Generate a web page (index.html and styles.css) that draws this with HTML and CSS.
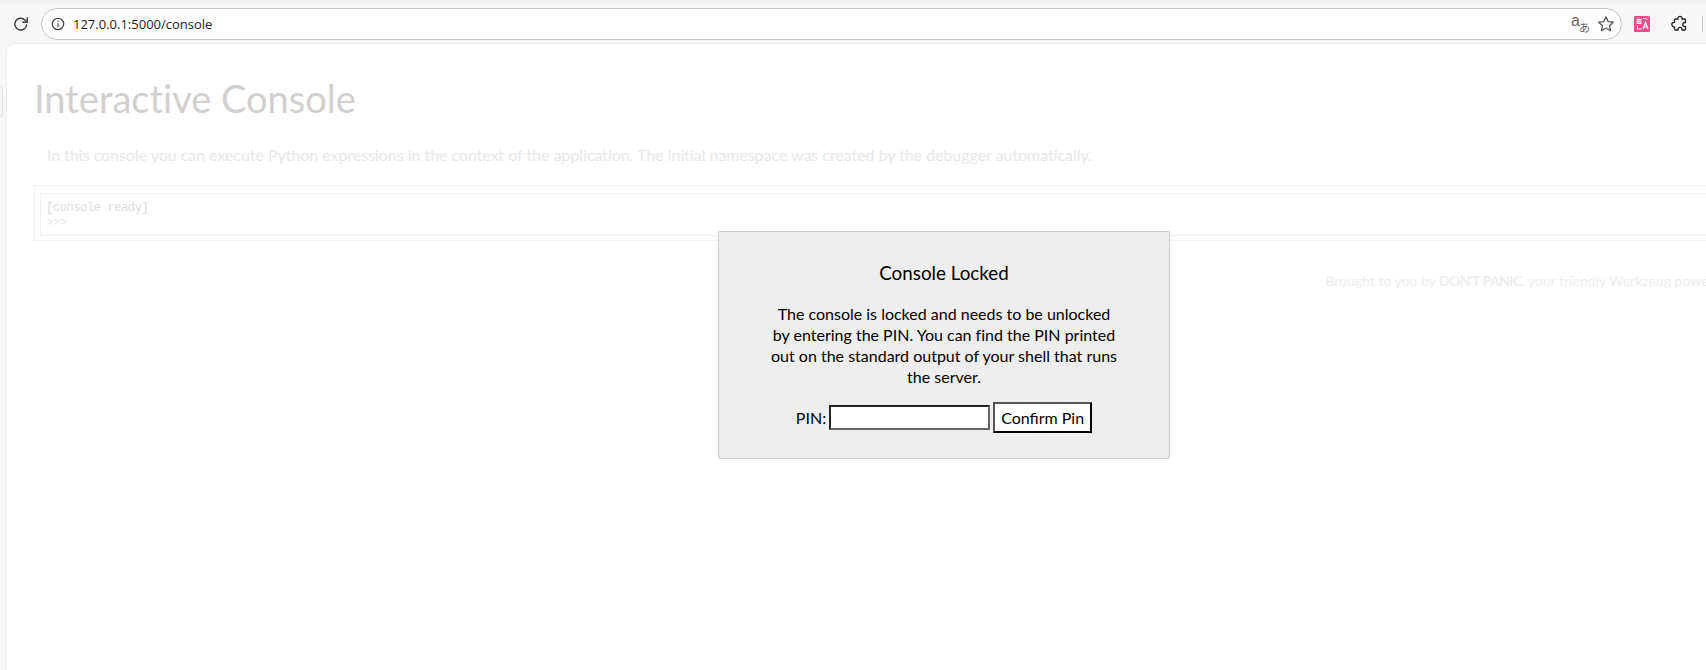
FILE: index.html
```html
<!DOCTYPE html>
<html lang="en">
<head>
<meta charset="utf-8">
<title>Console // Werkzeug Debugger</title>
<link rel="stylesheet" href="styles.css">
</head>
<body>
<header class="toolbar">
  <svg class="reload" width="18" height="18" viewBox="0 0 18 18"><path d="M14.600 9.200a5.900 5.900 0 1 1-1.700-4.200L14.600 6.600" fill="none" stroke="#3c3c3c" stroke-width="1.400"/><path d="M15.200 2.200v5h-5" fill="none" stroke="#3c3c3c" stroke-width="1.400"/></svg>
  <div class="omnibox">
    <svg class="info" width="16" height="16" viewBox="0 0 16 16"><circle cx="8" cy="8" r="5.700" fill="none" stroke="#444" stroke-width="1.200"/><path d="M8 7.200v4M8 4.800v1.300" stroke="#444" stroke-width="1.200"/></svg>
    <span class="url">127.0.0.1:5000/console</span>
    <span class="omni-end">
      <svg width="22" height="22" viewBox="0 0 22 22"><text x="1" y="13" class="tr-a">a</text><text x="9" y="19" class="tr-j">あ</text></svg>
      <svg width="18" height="18" viewBox="0 0 18 18"><path d="M9 1.800l2.200 4.800 5.100.6-3.800 3.500 1.100 5.100L9 13.200l-4.600 2.600 1.100-5.100-3.800-3.500 5.100-.6z" fill="none" stroke="#555" stroke-width="1.300" stroke-linejoin="round"/></svg>
    </span>
  </div>
  <div class="ext">
    <svg width="16" height="16" viewBox="0 0 16 16"><rect width="16" height="16" rx="1.500" fill="#ec4a8a"/><path d="M2.500 3.500h5M5 2v5M3 5h4v2.500H3zM3.500 9.500v3.500h4M9 3c2-1 3.500-.6 4.500 1" fill="none" stroke="#fff" stroke-width="1"/><path d="M9 13l2.500-6.500L14 13M9.800 11h3.400" fill="none" stroke="#fff" stroke-width="1.200"/></svg>
  </div>
  <svg class="puzzle" width="18" height="18" viewBox="0 0 18 18"><path d="M7 3.300a2 2 0 0 1 4 0V4h2.500a1 1 0 0 1 1 1v2.500h-.7a2 2 0 0 0 0 4h.7V14a1 1 0 0 1-1 1H11v-.7a2 2 0 0 0-4 0v.7H4.500a1 1 0 0 1-1-1v-2.200H3a2.200 2.200 0 0 1 0-4.400h.5V5a1 1 0 0 1 1-1H7z" fill="none" stroke="#222" stroke-width="1.300" stroke-linejoin="round"/></svg>
  <span class="divider"></span>
</header>
<span class="edge-mark"></span>
<main class="viewport">
  <div class="page">
    <h1 class="title">Interactive Console</h1>
    <p class="intro">In this console you can execute Python expressions in the context of the application. The initial namespace was created by the debugger automatically.</p>
    <div class="console">
      <div class="inner">
        <div>[console ready]</div>
        <div class="prompt">&gt;&gt;&gt;</div>
      </div>
    </div>
    <footer class="footer">Brought to you by <strong class="brand">DON'T PANIC</strong>, your friendly Werkzeug powered traceback interpreter.</footer>
  </div>
  <div class="modal">
    <h2 class="modal-title">Console Locked</h2>
    <p class="modal-text">The console is locked and needs to be unlocked by entering the PIN. You can find the PIN printed out on the standard output of your shell that runs the server.</p>
    <form class="pin-form">
      <label class="pin-label">PIN: <input class="pin-input" type="text"></label>
      <button class="pin-button" type="button">Confirm Pin</button>
    </form>
  </div>
</main>
</body>
</html>
```
FILE: styles.css
```css
* { box-sizing: border-box; }
html, body { margin: 0; height: 100%; overflow: hidden; }
body { position: relative; background: #f7f7f7; font-family: Lato, "Noto Sans", sans-serif; font-variant-ligatures: none; display: flex; flex-direction: column; }
.toolbar { height: 44px; flex: none; display: flex; align-items: center; padding: 0 0 0 12px; background: #f7f7f7; border-top: 4px solid #f2f2f2; }
.reload { flex: none; }
.omnibox { margin-left: 11px; width: 1581px; height: 32px; border: 1px solid #c4c4c4; border-radius: 16px; background: #fff; display: flex; align-items: center; padding: 0 6px 0 8px; }
.url { margin-left: 7px; font: 13px "Open Sans", sans-serif; color: #222; }
.omni-end { margin-left: auto; display: flex; gap: 5px; align-items: center; }
.tr-a { font: 16px "Liberation Sans", sans-serif; fill: #666; }
.tr-j { font: 11px "Noto Sans CJK JP", sans-serif; fill: #666; }
.ext { margin-left: 12px; width: 16px; height: 16px; display: flex; }
.puzzle { margin-left: 21px; flex: none; }
.divider { margin-left: 13px; width: 1px; height: 16px; background: #ccc; }
.edge-mark { position: absolute; left: 0; top: 87px; width: 3px; height: 30px; border: 1px solid #e2e2e2; border-left: 0; border-radius: 0 4px 4px 0; }
.viewport { position: relative; flex: 1; margin-left: 7px; background: #fff; border-radius: 8px 0 0 0; overflow: hidden; box-shadow: 0 0 0 1px #eee; }
.page { width: 1857px; padding: 0 0 0 27px; }
.title { margin: 0; padding-top: 29px; font-size: 38px; line-height: 50px; font-weight: 400; color: #d2d0cf; }
.intro { margin: 21px 0 0 13px; font-size: 15.920px; line-height: 22px; color: #e8e8e8; }
.console { margin-top: 19px; height: 56px; padding: 7px 4px 4px 5px; border: 1px solid #f3f3f3; }
.inner { height: 100%; padding: 7px 5px; border: 1px solid #f3f3f3; font: 400 12px/15px "Liberation Mono", monospace; letter-spacing: -0.380px; color: #dcdcdc; }
.prompt { color: #ececec; }
.footer { margin-top: 31px; font-size: 14px; text-align: right; color: #eeeeee; }
.brand { letter-spacing: -0.6px; }
.modal { position: absolute; left: 711px; top: 187px; width: 452px; height: 228px; padding: 29px 50px 0; background: #eee; border: 1px solid #ccc; border-radius: 2px; color: #000; text-align: center; }
.modal-title { margin: 0; font-size: 18.800px; line-height: 24px; font-weight: 400; }
.modal-text { margin: 18px 0 0; font-size: 16px; line-height: 21px; }
.pin-form { margin-top: 15px; display: flex; justify-content: center; align-items: center; gap: 3px; }
.pin-label { font-size: 16px; display: flex; align-items: center; gap: 3px; }
.pin-input { width: 161px; height: 25px; border: 2px solid; border-color: #222 #666 #666 #222; background: #fff; padding: 0; }
.pin-button { width: 99px; height: 31px; background: #fff; border: 2px solid; border-color: #555 #000 #000 #555; padding: 0; font: 16px Lato, sans-serif; color: #000; }
```
